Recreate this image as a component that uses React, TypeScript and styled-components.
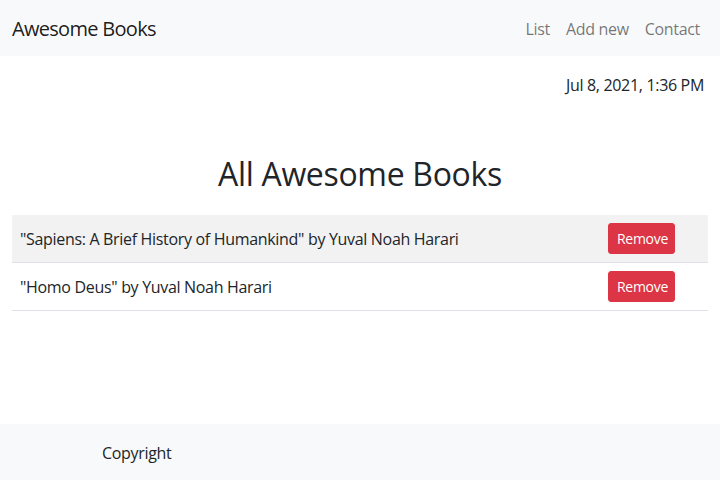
import styled, { createGlobalStyle } from "styled-components";
import { useState } from "react";

const GlobalStyle = createGlobalStyle`
  body {
    margin: 0;
    font-family: "Open Sans", "Noto Sans", sans-serif;
    font-size: 16px;
    line-height: 1.5;
    letter-spacing: -0.02em;
    color: #212529;
    background: #fff;
  }
  * { box-sizing: border-box; }
`;

const Page = styled.div`
  min-height: 100vh;
  display: flex;
  flex-direction: column;
`;

const Navbar = styled.nav`
  display: flex;
  justify-content: space-between;
  align-items: center;
  height: 56px;
  padding: 9px 12px 7px;
  background-color: #f8f9fa;
`;

const Brand = styled.a`
  font-size: 20px;
  line-height: 30px;
  letter-spacing: -0.035em;
  color: rgba(0, 0, 0, 0.9);
  text-decoration: none;
`;

const NavLinks = styled.ul`
  display: flex;
  list-style: none;
  margin: 0;
  padding: 0;
`;

const NavLink = styled.a`
  display: block;
  padding: 8px;
  color: rgba(0, 0, 0, 0.55);
  text-decoration: none;
  cursor: pointer;
`;

const Main = styled.main`
  flex: 1;
  padding: 0 12px;
`;

const DateLine = styled.p`
  margin: 17px 4px 0 0;
  text-align: right;
`;

const Heading = styled.h2`
  margin: 58px 0 22px;
  text-align: center;
  font-size: 32px;
  font-weight: 400;
  line-height: 1.2;
  letter-spacing: -0.01em;
`;

const Table = styled.table`
  width: 100%;
  border-collapse: collapse;
`;

const Row = styled.tr<{ $striped: boolean }>`
  background-color: ${({ $striped }) => ($striped ? "#f2f2f2" : "transparent")};
  border-bottom: 1px solid #dee2e6;
`;

const Cell = styled.td`
  padding: 8px;
  vertical-align: middle;
  line-height: 24px;
`;

const ActionCell = styled.td`
  width: 100px;
  padding: 8px 33px 8px 0;
  text-align: right;
`;

const RemoveButton = styled.button`
  font-family: inherit;
  font-size: 14px;
  line-height: 1.5;
  letter-spacing: -0.02em;
  padding: 4px 8px;
  width: 67px;
  height: 31px;
  color: #fff;
  background-color: #dc3545;
  border: 1px solid #dc3545;
  border-radius: 3px;
  cursor: pointer;
`;

const Footer = styled.footer`
  height: 56px;
  display: flex;
  align-items: center;
  padding: 2px 0 0 102px;
  background-color: #f8f9fa;
`;

interface Book {
  id: number;
  title: string;
  author: string;
}

export default function App() {
  const [books, setBooks] = useState<Book[]>([
    { id: 1, title: "Sapiens: A Brief History of Humankind", author: "Yuval Noah Harari" },
    { id: 2, title: "Homo Deus", author: "Yuval Noah Harari" },
  ]);

  return (
    <Page>
      <GlobalStyle />
      <Navbar>
        <Brand>Awesome Books</Brand>
        <NavLinks>
          <li><NavLink>List</NavLink></li>
          <li><NavLink>Add new</NavLink></li>
          <li><NavLink>Contact</NavLink></li>
        </NavLinks>
      </Navbar>

      <Main>
        <DateLine>Jul 8, 2021, 1:36 PM</DateLine>
        <Heading>All Awesome Books</Heading>
        <Table>
          <tbody>
            {books.map((book, i) => (
              <Row key={book.id} $striped={i % 2 === 0}>
                <Cell>"{book.title}" by {book.author}</Cell>
                <ActionCell>
                  <RemoveButton onClick={() => setBooks(books.filter((b) => b.id !== book.id))}>
                    Remove
                  </RemoveButton>
                </ActionCell>
              </Row>
            ))}
          </tbody>
        </Table>
      </Main>

      <Footer>Copyright</Footer>
    </Page>
  );
}
